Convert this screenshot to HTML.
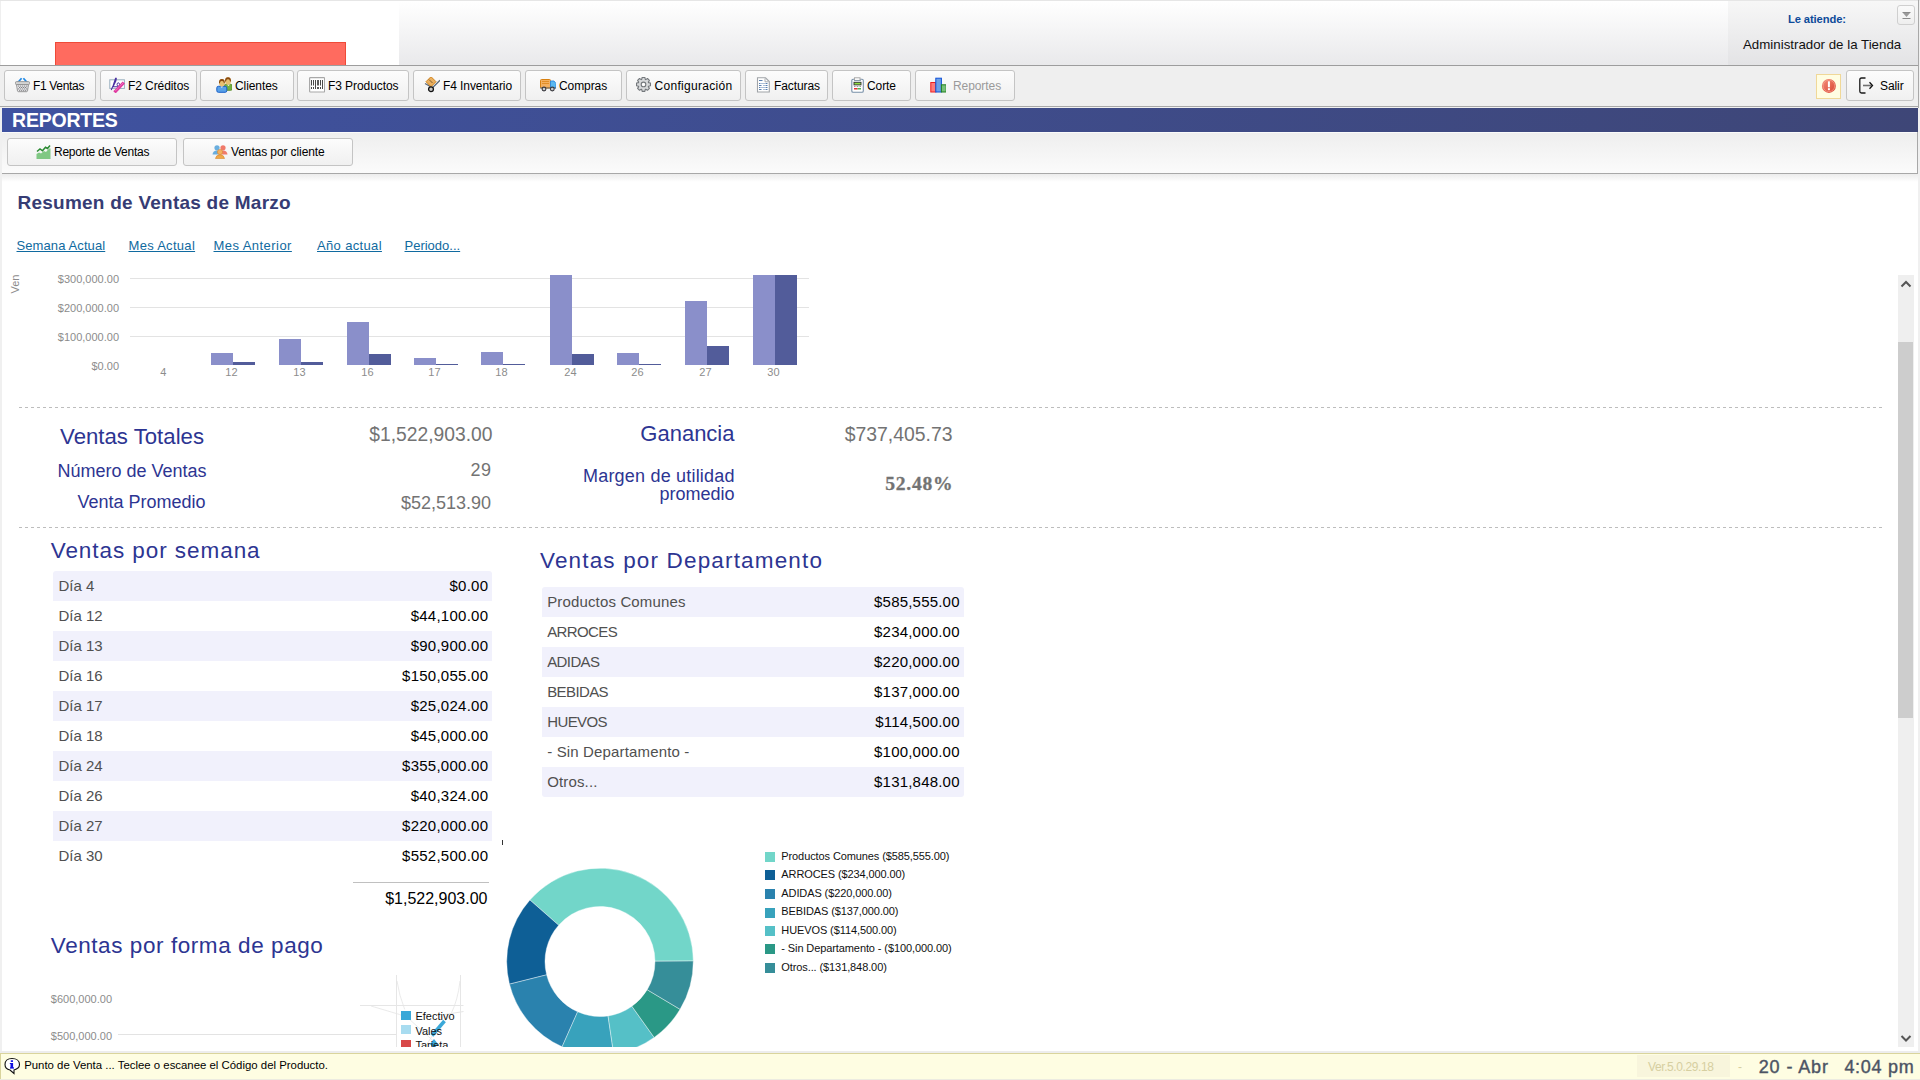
<!DOCTYPE html><html><head><meta charset="utf-8"><style>
*{box-sizing:border-box;margin:0;padding:0}
html,body{width:1920px;height:1080px;overflow:hidden;background:#f0f0f0;font-family:"Liberation Sans",sans-serif}
.a{position:absolute}
#hdr{left:0;top:0;width:1920px;height:66px;background:#efefef;border-top:1px solid #e6e6e6}
#hwhite{left:1px;top:1px;width:398px;height:64px;background:#fff}
#red{left:55px;top:42px;width:291px;height:23px;background:#ff6b5f;border:1px solid #ef4a38;border-bottom:none}
#hgrad{left:399px;top:1px;width:1329px;height:64px;background:linear-gradient(#ffffff,#e9e9eb)}
#hright{left:1728px;top:1px;width:190px;height:64px;background:linear-gradient(#f7f7f7,#e3e3e5)}
#hline{left:0;top:65px;width:1919px;height:1px;background:#9d9d9d}
#rline{left:1918px;top:0;width:1px;height:108px;background:#a8a8a8}
#tb{left:0;top:66px;width:1918px;height:40px;background:#efefef}
.btn{position:absolute;top:70px;height:31px;border:1px solid #c4c4c4;border-radius:3px;background:linear-gradient(#fcfcfc,#f0f0f0);font-size:12px;letter-spacing:-0.08px;color:#000;line-height:29px;white-space:nowrap}
.btn .ic{position:absolute;top:6px;width:16px;height:16px}
.btn .tx{position:absolute;top:1px}
#tline{left:0;top:106px;width:1919px;height:1px;background:#a8a8a8}
#banner{left:2px;top:108px;width:1916px;height:24px;background:linear-gradient(90deg,#3f52a0,#3e4677);color:#fff;font-weight:bold;font-size:19.5px;line-height:25.5px;padding-left:10px;letter-spacing:-0.2px;overflow:hidden}
#sub{left:2px;top:132px;width:1916px;height:41px;background:linear-gradient(#eeeeee,#fbfbfb)}
#sline{left:2px;top:173px;width:1916px;height:1px;background:#a8a8a8}
#content{left:2px;top:174px;width:1916px;height:877px;background:#fff;overflow:hidden}
#status{left:0;top:1053px;width:1920px;height:27px;background:#fefde2;border-top:1px solid #d9d49c;border-left:1px solid #d9d49c}
</style></head><body>

<div id="hdr" class="a"></div>
<div id="hwhite" class="a"><div id="red" class="a" style="left:54px;top:41px"></div></div>
<div id="hgrad" class="a"></div>
<div id="hright" class="a"></div>
<div id="hline" class="a"></div>
<div id="tb" class="a"></div>
<div id="tline" class="a"></div>
<div id="banner" class="a">REPORTES</div>
<div id="sub" class="a"></div>
<div id="sline" class="a"></div>
<div id="content" class="a"></div>
<div id="status" class="a"></div>
<div id="rline" class="a"></div>

<div class="a" style="left:2px;top:174px;width:1916px;height:8px;background:linear-gradient(#ececec,#ffffff);"></div>
<div class="a" style="left:1917px;top:132px;width:1px;height:42px;background:#a8a8a8;"></div>
<div class="a" style="left:2px;top:132px;width:1915px;height:1px;background:#fafafa;"></div>
<div class="a" style="top:192.91px;font:bold 19px/19px 'Liberation Sans',sans-serif;color:#363c74;white-space:nowrap;letter-spacing:0.24px;left:17.5px;">Resumen de Ventas de Marzo</div>
<div class="a" style="top:238.59px;font:normal 13px/13px 'Liberation Sans',sans-serif;color:#106aa0;white-space:nowrap;letter-spacing:0.1px;left:16.5px;text-decoration:underline;">Semana Actual</div>
<div class="a" style="top:238.59px;font:normal 13px/13px 'Liberation Sans',sans-serif;color:#106aa0;white-space:nowrap;letter-spacing:0.3px;left:128.5px;text-decoration:underline;">Mes Actual</div>
<div class="a" style="top:238.59px;font:normal 13px/13px 'Liberation Sans',sans-serif;color:#106aa0;white-space:nowrap;letter-spacing:0.45px;left:213.5px;text-decoration:underline;">Mes Anterior</div>
<div class="a" style="top:238.59px;font:normal 13px/13px 'Liberation Sans',sans-serif;color:#106aa0;white-space:nowrap;letter-spacing:0.35px;left:317px;text-decoration:underline;">Año actual</div>
<div class="a" style="top:238.59px;font:normal 13px/13px 'Liberation Sans',sans-serif;color:#106aa0;white-space:nowrap;left:404.5px;text-decoration:underline;">Periodo...</div>
<div class="a" style="left:130px;top:278px;width:679px;height:1px;background:#e3e3e3;"></div>
<div class="a" style="left:130px;top:307px;width:679px;height:1px;background:#e3e3e3;"></div>
<div class="a" style="left:130px;top:336px;width:679px;height:1px;background:#e3e3e3;"></div>
<div class="a" style="top:273.69px;font:normal 11px/11px 'Liberation Sans',sans-serif;color:#8c8c8c;white-space:nowrap;right:1801px;">$300,000.00</div>
<div class="a" style="top:302.69px;font:normal 11px/11px 'Liberation Sans',sans-serif;color:#8c8c8c;white-space:nowrap;right:1801px;">$200,000.00</div>
<div class="a" style="top:331.69px;font:normal 11px/11px 'Liberation Sans',sans-serif;color:#8c8c8c;white-space:nowrap;right:1801px;">$100,000.00</div>
<div class="a" style="top:360.69px;font:normal 11px/11px 'Liberation Sans',sans-serif;color:#8c8c8c;white-space:nowrap;right:1801px;">$0.00</div>
<div class="a" style="left:2px;top:277px;width:26px;height:14px;transform:rotate(-90deg);font:11px/14px 'Liberation Sans';color:#8c8c8c;text-align:center">Ven</div>
<div class="a" style="top:367.39px;font:normal 11px/11px 'Liberation Sans',sans-serif;color:#8c8c8c;white-space:nowrap;left:-136.6px;width:600px;text-align:center;">4</div>
<div class="a" style="left:211px;top:353px;width:22px;height:12px;background:#8a8fca;"></div>
<div class="a" style="left:233px;top:362px;width:22px;height:3px;background:#525c9a;"></div>
<div class="a" style="top:367.39px;font:normal 11px/11px 'Liberation Sans',sans-serif;color:#8c8c8c;white-space:nowrap;left:-68.6px;width:600px;text-align:center;">12</div>
<div class="a" style="left:279px;top:339px;width:22px;height:26px;background:#8a8fca;"></div>
<div class="a" style="left:301px;top:362px;width:22px;height:3px;background:#525c9a;"></div>
<div class="a" style="top:367.39px;font:normal 11px/11px 'Liberation Sans',sans-serif;color:#8c8c8c;white-space:nowrap;left:-0.6000000000000227px;width:600px;text-align:center;">13</div>
<div class="a" style="left:347px;top:322px;width:22px;height:43px;background:#8a8fca;"></div>
<div class="a" style="left:369px;top:354px;width:22px;height:11px;background:#525c9a;"></div>
<div class="a" style="top:367.39px;font:normal 11px/11px 'Liberation Sans',sans-serif;color:#8c8c8c;white-space:nowrap;left:67.39999999999998px;width:600px;text-align:center;">16</div>
<div class="a" style="left:414px;top:358px;width:22px;height:7px;background:#8a8fca;"></div>
<div class="a" style="left:436px;top:364px;width:22px;height:1px;background:#525c9a;"></div>
<div class="a" style="top:367.39px;font:normal 11px/11px 'Liberation Sans',sans-serif;color:#8c8c8c;white-space:nowrap;left:134.39999999999998px;width:600px;text-align:center;">17</div>
<div class="a" style="left:481px;top:352px;width:22px;height:13px;background:#8a8fca;"></div>
<div class="a" style="left:503px;top:364px;width:22px;height:1px;background:#525c9a;"></div>
<div class="a" style="top:367.39px;font:normal 11px/11px 'Liberation Sans',sans-serif;color:#8c8c8c;white-space:nowrap;left:201.39999999999998px;width:600px;text-align:center;">18</div>
<div class="a" style="left:550px;top:275px;width:22px;height:90px;background:#8a8fca;"></div>
<div class="a" style="left:572px;top:354px;width:22px;height:11px;background:#525c9a;"></div>
<div class="a" style="top:367.39px;font:normal 11px/11px 'Liberation Sans',sans-serif;color:#8c8c8c;white-space:nowrap;left:270.4px;width:600px;text-align:center;">24</div>
<div class="a" style="left:617px;top:353px;width:22px;height:12px;background:#8a8fca;"></div>
<div class="a" style="left:639px;top:364px;width:22px;height:1px;background:#525c9a;"></div>
<div class="a" style="top:367.39px;font:normal 11px/11px 'Liberation Sans',sans-serif;color:#8c8c8c;white-space:nowrap;left:337.4px;width:600px;text-align:center;">26</div>
<div class="a" style="left:685px;top:301px;width:22px;height:64px;background:#8a8fca;"></div>
<div class="a" style="left:707px;top:346px;width:22px;height:19px;background:#525c9a;"></div>
<div class="a" style="top:367.39px;font:normal 11px/11px 'Liberation Sans',sans-serif;color:#8c8c8c;white-space:nowrap;left:405.4px;width:600px;text-align:center;">27</div>
<div class="a" style="left:753px;top:275px;width:22px;height:90px;background:#8a8fca;"></div>
<div class="a" style="left:775px;top:275px;width:22px;height:90px;background:#525c9a;"></div>
<div class="a" style="top:367.39px;font:normal 11px/11px 'Liberation Sans',sans-serif;color:#8c8c8c;white-space:nowrap;left:473.4px;width:600px;text-align:center;">30</div>
<div class="a" style="left:19px;top:407px;width:1864px;height:1px;background:repeating-linear-gradient(90deg,#bdbdbd 0 3px,transparent 3px 6px);"></div>
<div class="a" style="left:19px;top:527px;width:1864px;height:1px;background:repeating-linear-gradient(90deg,#bdbdbd 0 3px,transparent 3px 6px);"></div>
<div class="a" style="top:426.00px;font:normal 22.2px/22.2px 'Liberation Sans',sans-serif;color:#2d3592;white-space:nowrap;right:1716px;">Ventas Totales</div>
<div class="a" style="top:424.66px;font:normal 19.3px/19.3px 'Liberation Sans',sans-serif;color:#737373;white-space:nowrap;right:1427.5px;">$1,522,903.00</div>
<div class="a" style="top:462.06px;font:normal 18px/18px 'Liberation Sans',sans-serif;color:#2d3592;white-space:nowrap;right:1713.5px;">Número de Ventas</div>
<div class="a" style="top:461.06px;font:normal 18px/18px 'Liberation Sans',sans-serif;color:#737373;white-space:nowrap;letter-spacing:0.5px;right:1429px;margin-right:-0.5px;">29</div>
<div class="a" style="top:493.26px;font:normal 18px/18px 'Liberation Sans',sans-serif;color:#2d3592;white-space:nowrap;right:1714.5px;">Venta Promedio</div>
<div class="a" style="top:493.96px;font:normal 18px/18px 'Liberation Sans',sans-serif;color:#737373;white-space:nowrap;right:1429px;">$52,513.90</div>
<div class="a" style="top:423.37px;font:normal 22px/22px 'Liberation Sans',sans-serif;color:#2d3592;white-space:nowrap;right:1185.5px;">Ganancia</div>
<div class="a" style="top:424.57px;font:normal 19.4px/19.4px 'Liberation Sans',sans-serif;color:#737373;white-space:nowrap;right:967.5px;">$737,405.73</div>
<div class="a" style="top:466.76px;font:normal 18px/18px 'Liberation Sans',sans-serif;color:#2d3592;white-space:nowrap;letter-spacing:0.2px;right:1185.5px;margin-right:-0.2px;">Margen de utilidad</div>
<div class="a" style="top:484.76px;font:normal 18px/18px 'Liberation Sans',sans-serif;color:#2d3592;white-space:nowrap;right:1185.5px;">promedio</div>
<div class="a" style="top:473.58px;font:bold 19.6px/19.6px 'Liberation Serif',sans-serif;color:#737373;white-space:nowrap;letter-spacing:0.7px;right:967.5px;margin-right:-0.7px;-webkit-text-stroke:0.3px #737373;">52.48%</div>
<div class="a" style="top:539.95px;font:normal 22.5px/22.5px 'Liberation Sans',sans-serif;color:#2d3592;white-space:nowrap;letter-spacing:0.94px;left:50.7px;">Ventas por semana</div>
<div class="a" style="left:53px;top:571px;width:439px;height:30px;background:#f1f1fc;border-radius:3px 3px 0 0;"></div>
<div class="a" style="top:578.30px;font:normal 15px/15px 'Liberation Sans',sans-serif;color:#505050;white-space:nowrap;left:58.5px;">Día 4</div>
<div class="a" style="top:578.30px;font:normal 15px/15px 'Liberation Sans',sans-serif;color:#000;white-space:nowrap;letter-spacing:0.25px;right:1432px;margin-right:-0.25px;">$0.00</div>
<div class="a" style="top:608.30px;font:normal 15px/15px 'Liberation Sans',sans-serif;color:#505050;white-space:nowrap;left:58.5px;">Día 12</div>
<div class="a" style="top:608.30px;font:normal 15px/15px 'Liberation Sans',sans-serif;color:#000;white-space:nowrap;letter-spacing:0.25px;right:1432px;margin-right:-0.25px;">$44,100.00</div>
<div class="a" style="left:53px;top:631px;width:439px;height:30px;background:#f1f1fc;"></div>
<div class="a" style="top:638.30px;font:normal 15px/15px 'Liberation Sans',sans-serif;color:#505050;white-space:nowrap;left:58.5px;">Día 13</div>
<div class="a" style="top:638.30px;font:normal 15px/15px 'Liberation Sans',sans-serif;color:#000;white-space:nowrap;letter-spacing:0.25px;right:1432px;margin-right:-0.25px;">$90,900.00</div>
<div class="a" style="top:668.30px;font:normal 15px/15px 'Liberation Sans',sans-serif;color:#505050;white-space:nowrap;left:58.5px;">Día 16</div>
<div class="a" style="top:668.30px;font:normal 15px/15px 'Liberation Sans',sans-serif;color:#000;white-space:nowrap;letter-spacing:0.25px;right:1432px;margin-right:-0.25px;">$150,055.00</div>
<div class="a" style="left:53px;top:691px;width:439px;height:30px;background:#f1f1fc;"></div>
<div class="a" style="top:698.30px;font:normal 15px/15px 'Liberation Sans',sans-serif;color:#505050;white-space:nowrap;left:58.5px;">Día 17</div>
<div class="a" style="top:698.30px;font:normal 15px/15px 'Liberation Sans',sans-serif;color:#000;white-space:nowrap;letter-spacing:0.25px;right:1432px;margin-right:-0.25px;">$25,024.00</div>
<div class="a" style="top:728.30px;font:normal 15px/15px 'Liberation Sans',sans-serif;color:#505050;white-space:nowrap;left:58.5px;">Día 18</div>
<div class="a" style="top:728.30px;font:normal 15px/15px 'Liberation Sans',sans-serif;color:#000;white-space:nowrap;letter-spacing:0.25px;right:1432px;margin-right:-0.25px;">$45,000.00</div>
<div class="a" style="left:53px;top:751px;width:439px;height:30px;background:#f1f1fc;"></div>
<div class="a" style="top:758.30px;font:normal 15px/15px 'Liberation Sans',sans-serif;color:#505050;white-space:nowrap;left:58.5px;">Día 24</div>
<div class="a" style="top:758.30px;font:normal 15px/15px 'Liberation Sans',sans-serif;color:#000;white-space:nowrap;letter-spacing:0.25px;right:1432px;margin-right:-0.25px;">$355,000.00</div>
<div class="a" style="top:788.30px;font:normal 15px/15px 'Liberation Sans',sans-serif;color:#505050;white-space:nowrap;left:58.5px;">Día 26</div>
<div class="a" style="top:788.30px;font:normal 15px/15px 'Liberation Sans',sans-serif;color:#000;white-space:nowrap;letter-spacing:0.25px;right:1432px;margin-right:-0.25px;">$40,324.00</div>
<div class="a" style="left:53px;top:811px;width:439px;height:30px;background:#f1f1fc;"></div>
<div class="a" style="top:818.30px;font:normal 15px/15px 'Liberation Sans',sans-serif;color:#505050;white-space:nowrap;left:58.5px;">Día 27</div>
<div class="a" style="top:818.30px;font:normal 15px/15px 'Liberation Sans',sans-serif;color:#000;white-space:nowrap;letter-spacing:0.25px;right:1432px;margin-right:-0.25px;">$220,000.00</div>
<div class="a" style="top:848.30px;font:normal 15px/15px 'Liberation Sans',sans-serif;color:#505050;white-space:nowrap;left:58.5px;">Día 30</div>
<div class="a" style="top:848.30px;font:normal 15px/15px 'Liberation Sans',sans-serif;color:#000;white-space:nowrap;letter-spacing:0.25px;right:1432px;margin-right:-0.25px;">$552,500.00</div>
<div class="a" style="left:353px;top:882px;width:136px;height:1px;background:#c0c0c0;"></div>
<div class="a" style="top:891.45px;font:normal 16px/16px 'Liberation Sans',sans-serif;color:#000;white-space:nowrap;right:1432.5px;">$1,522,903.00</div>
<div class="a" style="left:502px;top:840px;width:1px;height:5px;background:#333;"></div>
<div class="a" style="top:549.95px;font:normal 22.5px/22.5px 'Liberation Sans',sans-serif;color:#2d3592;white-space:nowrap;letter-spacing:1.16px;left:540px;">Ventas por Departamento</div>
<div class="a" style="left:542px;top:587px;width:422px;height:30px;background:#f1f1fc;border-radius:3px 3px 0 0;"></div>
<div class="a" style="top:594.30px;font:normal 15px/15px 'Liberation Sans',sans-serif;color:#505050;white-space:nowrap;letter-spacing:0.15px;left:547.2px;">Productos Comunes</div>
<div class="a" style="top:594.30px;font:normal 15px/15px 'Liberation Sans',sans-serif;color:#000;white-space:nowrap;letter-spacing:0.2px;right:960.5px;margin-right:-0.2px;">$585,555.00</div>
<div class="a" style="top:624.30px;font:normal 15px/15px 'Liberation Sans',sans-serif;color:#505050;white-space:nowrap;letter-spacing:-0.6px;left:547.2px;">ARROCES</div>
<div class="a" style="top:624.30px;font:normal 15px/15px 'Liberation Sans',sans-serif;color:#000;white-space:nowrap;letter-spacing:0.2px;right:960.5px;margin-right:-0.2px;">$234,000.00</div>
<div class="a" style="left:542px;top:647px;width:422px;height:30px;background:#f1f1fc;"></div>
<div class="a" style="top:654.30px;font:normal 15px/15px 'Liberation Sans',sans-serif;color:#505050;white-space:nowrap;letter-spacing:-0.6px;left:547.2px;">ADIDAS</div>
<div class="a" style="top:654.30px;font:normal 15px/15px 'Liberation Sans',sans-serif;color:#000;white-space:nowrap;letter-spacing:0.2px;right:960.5px;margin-right:-0.2px;">$220,000.00</div>
<div class="a" style="top:684.30px;font:normal 15px/15px 'Liberation Sans',sans-serif;color:#505050;white-space:nowrap;letter-spacing:-0.6px;left:547.2px;">BEBIDAS</div>
<div class="a" style="top:684.30px;font:normal 15px/15px 'Liberation Sans',sans-serif;color:#000;white-space:nowrap;letter-spacing:0.2px;right:960.5px;margin-right:-0.2px;">$137,000.00</div>
<div class="a" style="left:542px;top:707px;width:422px;height:30px;background:#f1f1fc;"></div>
<div class="a" style="top:714.30px;font:normal 15px/15px 'Liberation Sans',sans-serif;color:#505050;white-space:nowrap;letter-spacing:-0.6px;left:547.2px;">HUEVOS</div>
<div class="a" style="top:714.30px;font:normal 15px/15px 'Liberation Sans',sans-serif;color:#000;white-space:nowrap;letter-spacing:0.2px;right:960.5px;margin-right:-0.2px;">$114,500.00</div>
<div class="a" style="top:744.30px;font:normal 15px/15px 'Liberation Sans',sans-serif;color:#505050;white-space:nowrap;letter-spacing:0.15px;left:547.2px;">- Sin Departamento -</div>
<div class="a" style="top:744.30px;font:normal 15px/15px 'Liberation Sans',sans-serif;color:#000;white-space:nowrap;letter-spacing:0.2px;right:960.5px;margin-right:-0.2px;">$100,000.00</div>
<div class="a" style="left:542px;top:767px;width:422px;height:30px;background:#f1f1fc;border-radius:0 0 3px 3px;"></div>
<div class="a" style="top:774.30px;font:normal 15px/15px 'Liberation Sans',sans-serif;color:#505050;white-space:nowrap;letter-spacing:0.15px;left:547.2px;">Otros...</div>
<div class="a" style="top:774.30px;font:normal 15px/15px 'Liberation Sans',sans-serif;color:#000;white-space:nowrap;letter-spacing:0.2px;right:960.5px;margin-right:-0.2px;">$131,848.00</div>
<svg class="a" style="left:0;top:0;overflow:hidden" width="1920" height="1047" viewBox="0 0 1920 1047"><path d="M693.30 961.01 A93.3 93.3 0 0 0 529.89 899.95 L558.67 925.21 A55 55 0 0 1 655.00 961.21 Z" fill="#72d6c9" stroke="#fff" stroke-width="0.4"/><path d="M529.89 899.95 A93.3 93.3 0 0 0 509.49 984.13 L546.64 974.84 A55 55 0 0 1 558.67 925.21 Z" fill="#0e5f96" stroke="#fff" stroke-width="0.4"/><path d="M509.49 984.13 A93.3 93.3 0 0 0 562.11 1046.76 L577.67 1011.76 A55 55 0 0 1 546.64 974.84 Z" fill="#2a82ae" stroke="#fff" stroke-width="0.4"/><path d="M562.11 1046.76 A93.3 93.3 0 0 0 613.67 1053.79 L608.06 1015.91 A55 55 0 0 1 577.67 1011.76 Z" fill="#38a2bc" stroke="#fff" stroke-width="0.4"/><path d="M613.67 1053.79 A93.3 93.3 0 0 0 654.17 1037.46 L631.93 1006.28 A55 55 0 0 1 608.06 1015.91 Z" fill="#55c0c7" stroke="#fff" stroke-width="0.4"/><path d="M654.17 1037.46 A93.3 93.3 0 0 0 680.08 1009.37 L647.21 989.72 A55 55 0 0 1 631.93 1006.28 Z" fill="#2a9886" stroke="#fff" stroke-width="0.4"/><path d="M680.08 1009.37 A93.3 93.3 0 0 0 693.30 961.01 L655.00 961.21 A55 55 0 0 1 647.21 989.72 Z" fill="#368e99" stroke="#fff" stroke-width="0.4"/></svg>
<div class="a" style="left:765px;top:852px;width:10px;height:10px;background:#72d6c9;"></div>
<div class="a" style="top:850.99px;font:normal 11px/11px 'Liberation Sans',sans-serif;color:#111;white-space:nowrap;letter-spacing:-0.1px;left:781.3px;">Productos Comunes ($585,555.00)</div>
<div class="a" style="left:765px;top:870px;width:10px;height:10px;background:#0e5f96;"></div>
<div class="a" style="top:869.49px;font:normal 11px/11px 'Liberation Sans',sans-serif;color:#111;white-space:nowrap;letter-spacing:-0.1px;left:781.3px;">ARROCES ($234,000.00)</div>
<div class="a" style="left:765px;top:889px;width:10px;height:10px;background:#2a82ae;"></div>
<div class="a" style="top:887.99px;font:normal 11px/11px 'Liberation Sans',sans-serif;color:#111;white-space:nowrap;letter-spacing:-0.1px;left:781.3px;">ADIDAS ($220,000.00)</div>
<div class="a" style="left:765px;top:908px;width:10px;height:10px;background:#38a2bc;"></div>
<div class="a" style="top:906.49px;font:normal 11px/11px 'Liberation Sans',sans-serif;color:#111;white-space:nowrap;letter-spacing:-0.1px;left:781.3px;">BEBIDAS ($137,000.00)</div>
<div class="a" style="left:765px;top:926px;width:10px;height:10px;background:#55c0c7;"></div>
<div class="a" style="top:924.99px;font:normal 11px/11px 'Liberation Sans',sans-serif;color:#111;white-space:nowrap;letter-spacing:-0.1px;left:781.3px;">HUEVOS ($114,500.00)</div>
<div class="a" style="left:765px;top:944px;width:10px;height:10px;background:#2a9886;"></div>
<div class="a" style="top:943.49px;font:normal 11px/11px 'Liberation Sans',sans-serif;color:#111;white-space:nowrap;letter-spacing:-0.1px;left:781.3px;">- Sin Departamento - ($100,000.00)</div>
<div class="a" style="left:765px;top:963px;width:10px;height:10px;background:#368e99;"></div>
<div class="a" style="top:961.99px;font:normal 11px/11px 'Liberation Sans',sans-serif;color:#111;white-space:nowrap;letter-spacing:-0.1px;left:781.3px;">Otros... ($131,848.00)</div>
<div class="a" style="top:934.95px;font:normal 22.5px/22.5px 'Liberation Sans',sans-serif;color:#2d3592;white-space:nowrap;letter-spacing:0.57px;left:50.8px;">Ventas por forma de pago</div>
<div class="a" style="top:993.69px;font:normal 11px/11px 'Liberation Sans',sans-serif;color:#8c8c8c;white-space:nowrap;right:1808px;">$600,000.00</div>
<div class="a" style="top:1030.69px;font:normal 11px/11px 'Liberation Sans',sans-serif;color:#8c8c8c;white-space:nowrap;right:1808px;">$500,000.00</div>
<div class="a" style="left:118px;top:1034px;width:278px;height:1px;background:#e3e3e3;"></div>
<svg class="a" style="left:355px;top:970px" width="110" height="77" viewBox="355 970 110 77"><path d="M360 1005.5 L463.5 1005.5 M396.5 975 L396.5 1047 M460.5 975 L460.5 1047 M445 1014.5 L463.5 1011.5" stroke="#e6e6e6" stroke-width="1" fill="none"/><path d="M371 1006 L399.6 1014.5 L409.8 1019.6 L428.6 1036.7 L440 1047 M397 981 Q399 995 404.7 1009.4 M460 981 Q458 1000 450.7 1014.5 L432.8 1035 L425 1047" stroke="#e4e4e4" stroke-width="0.8" fill="none"/><path d="M444.5 1021 L432 1035.5" stroke="#3aa8d8" stroke-width="3.5"/><path d="M434 1039 L438 1044 L434 1049 L430 1044 Z" fill="#3aa8d8"/></svg>
<div class="a" style="left:395px;top:1005px;width:70px;height:42px;overflow:hidden">
<div class="a" style="left:6px;top:5.5px;width:10px;height:9px;background:#3aa8d8"></div>
<div class="a" style="left:20.399999999999977px;top:5.7px;font:11px/11px 'Liberation Sans';color:#111;white-space:nowrap">Efectivo</div>
<div class="a" style="left:6px;top:20.3px;width:10px;height:9px;background:#a8dcf0"></div>
<div class="a" style="left:20.399999999999977px;top:20.5px;font:11px/11px 'Liberation Sans';color:#111;white-space:nowrap">Vales</div>
<div class="a" style="left:6px;top:35.1px;width:10px;height:9px;background:#d84848"></div>
<div class="a" style="left:20.399999999999977px;top:35.3px;font:11px/11px 'Liberation Sans';color:#111;white-space:nowrap">Tarjeta</div>
</div>
<div class="a" style="left:1898px;top:275px;width:16px;height:772px;background:#efefef;"></div>
<div class="a" style="left:1898px;top:342px;width:15px;height:376px;background:#cdcdcd;"></div>
<svg class="a" style="left:1899px;top:279px" width="14" height="10" viewBox="0 0 14 10"><path d="M2.5 7.5 L7 3 L11.5 7.5" stroke="#555" stroke-width="2" fill="none"/></svg>
<svg class="a" style="left:1899px;top:1033px" width="14" height="10" viewBox="0 0 14 10"><path d="M2.5 3 L7 7.5 L11.5 3" stroke="#555" stroke-width="2" fill="none"/></svg>
<div class="a" style="left:0px;top:1051px;width:1920px;height:2px;background:#ededed;"></div>
<div class="a" style="left:0px;top:1079px;width:1920px;height:1px;background:#ecebe0;"></div>
<svg class="a" style="left:4px;top:1057px" width="18" height="18" viewBox="0 0 18 18"><path d="M8 1.5 C3.5 1.5 1 4 1 7.5 C1 10.5 3.5 12.5 6 13 L10 16.5 L10 13 C13.5 12 15.5 10 15.5 7.5 C15.5 4 12.5 1.5 8 1.5 Z" fill="#fff" stroke="#111" stroke-width="1.1"/><rect x="6.5" y="6" width="2.6" height="5" fill="#1010e0"/><rect x="6" y="10.3" width="4" height="1.3" fill="#1010e0"/><rect x="5.8" y="6" width="2" height="1" fill="#1010e0"/><rect x="6.8" y="3.3" width="2.2" height="1.6" fill="#1010e0"/></svg>
<div class="a" style="top:1060.35px;font:normal 11.4px/11.4px 'Liberation Sans',sans-serif;color:#000;white-space:nowrap;left:24.2px;">Punto de Venta ... Teclee o escanee el Código del Producto.</div>
<div class="a" style="left:1637px;top:1055px;width:93px;height:22px;background:#f8f5dc;"></div>
<div class="a" style="top:1060.84px;font:normal 12px/12px 'Liberation Sans',sans-serif;color:#d6cfa0;white-space:nowrap;letter-spacing:-0.4px;left:1648px;">Ver.5.0.29.18</div>
<div class="a" style="top:1060.84px;font:normal 12px/12px 'Liberation Sans',sans-serif;color:#d6cfa0;white-space:nowrap;left:1738px;">-</div>
<div class="a" style="top:1057.56px;font:normal 18px/18px 'Liberation Sans',sans-serif;color:#4c5464;white-space:nowrap;letter-spacing:0.9px;left:1758.7px;-webkit-text-stroke:0.4px #4c5464;">20 - Abr</div>
<div class="a" style="top:1057.56px;font:normal 18px/18px 'Liberation Sans',sans-serif;color:#4c5464;white-space:nowrap;letter-spacing:0.7px;left:1844.4px;-webkit-text-stroke:0.4px #4c5464;">4:04 pm</div>
<!-- toolbar buttons -->
<div class="btn" style="left:4px;width:92px"><svg class="ic" style="left:10px" viewBox="0 0 16 16"><path d="M2.6 5.8 L6.6 1.3 M8.4 1.3 L12.4 5.8" stroke="#1e88e5" stroke-width="1.7" fill="none"/><rect x="0.4" y="4.6" width="14.2" height="3" rx="1.2" fill="#d4d4d4" stroke="#8a8a8a" stroke-width="0.8"/><path d="M1.5 7.6 L13.5 7.6 L12.5 13.9 Q12.3 14.7 11.5 14.7 L3.5 14.7 Q2.7 14.7 2.5 13.9 Z" fill="#ececf0" stroke="#8a8a8a" stroke-width="0.9"/><rect x="3.2" y="8.6" width="1" height="1" fill="#6a6a6a"/><rect x="5.2" y="8.6" width="1" height="1" fill="#6a6a6a"/><rect x="7.2" y="8.6" width="1" height="1" fill="#6a6a6a"/><rect x="9.2" y="8.6" width="1" height="1" fill="#6a6a6a"/><rect x="11.2" y="8.6" width="1" height="1" fill="#6a6a6a"/><rect x="4.2" y="10.0" width="1" height="1" fill="#6a6a6a"/><rect x="6.2" y="10.0" width="1" height="1" fill="#6a6a6a"/><rect x="8.2" y="10.0" width="1" height="1" fill="#6a6a6a"/><rect x="10.2" y="10.0" width="1" height="1" fill="#6a6a6a"/><rect x="3.2" y="11.4" width="1" height="1" fill="#6a6a6a"/><rect x="5.2" y="11.4" width="1" height="1" fill="#6a6a6a"/><rect x="7.2" y="11.4" width="1" height="1" fill="#6a6a6a"/><rect x="9.2" y="11.4" width="1" height="1" fill="#6a6a6a"/><rect x="11.2" y="11.4" width="1" height="1" fill="#6a6a6a"/><rect x="4.2" y="12.8" width="1" height="1" fill="#6a6a6a"/><rect x="6.2" y="12.8" width="1" height="1" fill="#6a6a6a"/><rect x="8.2" y="12.8" width="1" height="1" fill="#6a6a6a"/><rect x="10.2" y="12.8" width="1" height="1" fill="#6a6a6a"/></svg><span class="tx" style="left:28px;letter-spacing:-0.33px">F1 Ventas</span></div>
<div class="btn" style="left:100px;width:97px"><svg class="ic" style="left:8px" viewBox="0 0 16 16"><rect x="0.8" y="2.8" width="14.6" height="8.6" fill="#fff" stroke="#98aebe" stroke-width="1"/><path d="M2.2 13 L4.2 8.5 L6.5 1.5 Q7 0.8 7.3 1.5 L6.8 4 L4 9.8 L9.5 9.8" stroke="#4a30a0" stroke-width="1.1" fill="none"/><ellipse cx="9.3" cy="7.5" rx="1.2" ry="1.7" fill="none" stroke="#4a30a0" stroke-width="1"/><path d="M5.5 15.3 L14.8 5.5" stroke="#e03aa0" stroke-width="3.2"/><path d="M6.5 13.8 L14 6" stroke="#fbd0ea" stroke-width="0.7" stroke-dasharray="0.8 0.8"/></svg><span class="tx" style="left:27px">F2 Créditos</span></div>
<div class="btn" style="left:200px;width:94px"><svg class="ic" style="left:15px" viewBox="0 0 16 16"><rect x="8.2" y="7.3" width="8" height="6" rx="1.6" fill="#72b040" stroke="#5a8a28" stroke-width="0.9"/><path d="M11 7.5 L12.5 9 L14 7.5" fill="#fff"/><ellipse cx="12" cy="4" rx="2.9" ry="3.7" fill="#e8c070"/><path d="M9 4.5 Q8.8 0.2 12 0.2 Q15.2 0.2 15 4.5 L14 4.5 Q13.8 2 12 2.2 Q10.2 2 10 4.5 Z" fill="#8a4a10"/><rect x="0.8" y="9.3" width="10" height="6" rx="1.6" fill="#58a0e8" stroke="#1a60c8" stroke-width="1"/><path d="M4.5 9.4 L5.8 10.8 L7.1 9.4" fill="#fff"/><ellipse cx="5.9" cy="5.7" rx="2.9" ry="3.7" fill="#e8c070"/><path d="M3 6.2 Q2.8 1.9 5.9 1.9 Q9 1.9 8.8 6.2 L7.9 6.2 Q7.7 3.7 5.9 3.9 Q4.1 3.7 3.9 6.2 Z" fill="#8a4a10"/></svg><span class="tx" style="left:34px">Clientes</span></div>
<div class="btn" style="left:297px;width:112px"><svg class="ic" style="left:11px" viewBox="0 0 16 16"><rect x="0.6" y="0.6" width="15" height="14.4" rx="0.8" fill="#fff" stroke="#a8a8a8" stroke-width="1.2"/><path d="M2.5 3v5.5M4.5 3v5.5M6.5 3v9M11.5 3v5.5M13.5 3v9M2.5 10v2M4.5 10v2M11.5 10v2" stroke="#4a4a4a" stroke-width="1"/><path d="M9 3v5.5M9 10v2" stroke="#4a4a4a" stroke-width="1.8"/></svg><span class="tx" style="left:30px">F3 Productos</span></div>
<div class="btn" style="left:413px;width:108px"><svg class="ic" style="left:10px" viewBox="0 0 16 16"><path d="M1 6.5 L8.5 10.8 L16 3.2" stroke="#5a6878" stroke-width="1.3" fill="none"/><path d="M7 -0.3 L12 4.7 L7 9.7 L2 4.7 Z" fill="#eab060" stroke="#d08018" stroke-width="1"/><path d="M5.3 2.8 L8.2 5.7" stroke="#2a1a08" stroke-width="1" stroke-dasharray="0.9 0.6"/><circle cx="7" cy="12.2" r="2.4" fill="#c8c8c8" stroke="#111" stroke-width="1.3"/></svg><span class="tx" style="left:29px">F4 Inventario</span></div>
<div class="btn" style="left:525px;width:97px"><svg class="ic" style="left:14px" viewBox="0 0 16 16"><rect x="0.5" y="2.5" width="10" height="8.5" rx="1" fill="#f4b060" stroke="#d88010" stroke-width="1"/><path d="M2 4.5h7M2 6.5h7" stroke="#e08a20" stroke-width="0.9"/><path d="M10.5 4 L14 4 L16 6.5 L16 11 L10.5 11 Z" fill="#5ab8f0" stroke="#2a88e0" stroke-width="0.9"/><path d="M0 11h16" stroke="#4a5868" stroke-width="0.8"/><circle cx="4" cy="12" r="1.9" fill="#ccc" stroke="#3a3a40" stroke-width="1.1"/><circle cx="12.3" cy="12" r="1.9" fill="#ccc" stroke="#3a3a40" stroke-width="1.1"/></svg><span class="tx" style="left:33px">Compras</span></div>
<div class="btn" style="left:626px;width:115px"><svg class="ic" style="left:9px" viewBox="0 0 16 16"><path d="M12.48 5.59 L14.47 6.05 L14.47 8.75 L12.48 9.21 L12.30 9.64 L13.39 11.37 L11.47 13.29 L9.74 12.20 L9.31 12.38 L8.85 14.37 L6.15 14.37 L5.69 12.38 L5.26 12.20 L3.53 13.29 L1.61 11.37 L2.70 9.64 L2.52 9.21 L0.53 8.75 L0.53 6.05 L2.52 5.59 L2.70 5.16 L1.61 3.43 L3.53 1.51 L5.26 2.60 L5.69 2.42 L6.15 0.43 L8.85 0.43 L9.31 2.42 L9.74 2.60 L11.47 1.51 L13.39 3.43 L12.30 5.16 Z" fill="#d6d8da" stroke="#74787c" stroke-width="1.1" stroke-linejoin="round"/><circle cx="7.5" cy="7.4" r="2.3" fill="#fff" stroke="#74787c" stroke-width="1.1"/></svg><span class="tx" style="left:27.5px;letter-spacing:0.3px">Configuración</span></div>
<div class="btn" style="left:745px;width:83px"><svg class="ic" style="left:10px" viewBox="0 0 16 16"><path d="M1.5 0.8 L9.5 0.8 L13.3 4.6 L13.3 15 L1.5 15 Z" fill="#fff" stroke="#a0a4a8" stroke-width="1.1"/><path d="M9 1.5 L9 4.8 L12.5 4.8" fill="none" stroke="#a0a4a8" stroke-width="0.9"/><path d="M3 3.5h3.5M3 6.5h1.5M5.5 6.5h1M7.5 6.5h1M9.5 6.5h2M3 8.5h2.5M7.5 8.5h1M9.5 8.5h2M3 10.5h1.5M5.5 10.5h1M7.5 10.5h1M9.5 10.5h2M3 12.5h2.5M7.5 12.5h1M9.5 12.5h2" stroke="#5a80b0" stroke-width="1"/></svg><span class="tx" style="left:28px">Facturas</span></div>
<div class="btn" style="left:832px;width:79px"><svg class="ic" style="left:17px" viewBox="0 0 16 16"><rect x="1.8" y="2.2" width="11.5" height="13" rx="1.3" fill="#fff" stroke="#7890a8" stroke-width="1.1"/><rect x="4.5" y="0.8" width="5.5" height="2.6" fill="#fff" stroke="#a8a8a8" stroke-width="1"/><path d="M4 3.6h7" stroke="#7890a8" stroke-width="0.8"/><rect x="4" y="5.3" width="7" height="2.6" fill="#90e040" stroke="#303030" stroke-width="0.9"/><path d="M4 9.5h1.5M6.7 9.5h1.6M9.5 9.5h1.5" stroke="#909090" stroke-width="0.9"/><path d="M4 11.8h3.5" stroke="#e00000" stroke-width="1.2"/><path d="M7.5 11.8h3.5" stroke="#28a028" stroke-width="1.2"/></svg><span class="tx" style="left:34px">Corte</span></div>
<div class="btn" style="left:915px;width:100px;color:#9a9a9a"><svg class="ic" style="left:14px" viewBox="0 0 16 16"><rect x="0.8" y="5.5" width="5" height="9.5" fill="#ff7a7a" stroke="#ee2020" stroke-width="1"/><rect x="5.8" y="1.2" width="5.6" height="13.8" fill="#6ca0e8" stroke="#1050d8" stroke-width="1"/><rect x="11.4" y="7.8" width="4.8" height="7.2" fill="#78c078" stroke="#208020" stroke-width="1"/></svg><span class="tx" style="left:37px">Reportes</span></div>
<div class="a" style="left:1816px;top:74px;width:25px;height:25px;background:#fffde2;border:1px solid #f0d898"><svg class="a" style="left:4px;top:3px" width="16" height="16" viewBox="0 0 16 16"><defs><linearGradient id="wg" x1="0" y1="0" x2="1" y2="1"><stop offset="0" stop-color="#f4907a"/><stop offset="1" stop-color="#d84030"/></linearGradient></defs><circle cx="7.9" cy="7.9" r="7" fill="url(#wg)"/><circle cx="7.9" cy="7.9" r="5.8" fill="none" stroke="#f8a898" stroke-width="0.6"/><rect x="6.9" y="3.3" width="2" height="6" fill="#fff"/><rect x="6.9" y="10.2" width="2" height="2" fill="#fff"/></svg></div>
<div class="btn" style="left:1846px;width:68px"><svg class="ic" style="left:11px;top:5.5px;width:18px;height:17px" viewBox="0 0 18 17"><path d="M7.5 1 L3.5 1 Q1.8 1 1.8 2.8 L1.8 14.2 Q1.8 16 3.5 16 L7.5 16" fill="none" stroke="#1a1a1a" stroke-width="1.3"/><path d="M5 8.5 L13.5 8.5" stroke="#707070" stroke-width="1.6"/><path d="M11.5 5.3 L14.5 8.5 L11.5 11.7" fill="none" stroke="#111" stroke-width="1.3"/></svg><span class="tx" style="left:33px">Salir</span></div>
<!-- header right -->
<div class="a" style="left:1788px;top:13px;font-size:11.2px;font-weight:bold;color:#0d4a9a;letter-spacing:-0.1px">Le atiende:</div>
<div class="a" style="left:1743px;top:37px;font-size:13.3px;color:#111">Administrador de la Tienda</div>
<div class="a" style="left:1897px;top:5px;width:18px;height:20px;border:1px solid #cfcfcf;border-radius:3px;background:linear-gradient(#fafafa,#eeeeee)"><svg class="a" style="left:4px;top:6px" width="9" height="7" viewBox="0 0 9 7"><path d="M0.5 0.5h8M0.5 6.5h8" stroke="#8a8a8a" stroke-width="1"/><path d="M1 1 L8 1 L4.5 5 Z" fill="#9a9a9a"/></svg></div>

<!-- sub toolbar -->
<div class="btn" style="left:7px;top:138px;width:170px;height:28px;line-height:26px"><svg class="ic" style="left:28px;top:5px" viewBox="0 0 16 16"><path d="M0.5 15 L0.5 10 L3 8.5 L5 9.5 L8 7 L10 8 L13 4.5 L14.5 4.5 L14.5 15 Z" fill="#80c884"/><path d="M1 7.5 L4 5 L6.5 6.8 L9.5 3.3 L11.5 4.5 L14 1.5" fill="none" stroke="#2a8a32" stroke-width="1.5"/></svg><span class="tx" style="left:46px;top:0;letter-spacing:-0.25px">Reporte de Ventas</span></div>
<div class="btn" style="left:183px;top:138px;width:170px;height:28px;line-height:26px"><svg class="ic" style="left:28px;top:5px" viewBox="0 0 16 16"><circle cx="5" cy="3.8" r="2.6" fill="#6aaede"/><path d="M0.5 10.5 Q1 6.5 5 6.5 Q8 6.5 8.5 9 L8.5 10.5 Z" fill="#6aaede"/><circle cx="11" cy="3.8" r="2.6" fill="#f07a6a"/><path d="M7.5 9 Q8 6.5 11 6.5 Q15 6.5 15.5 10.5 L7.5 10.5 Z" fill="#f07a6a"/><circle cx="8" cy="8" r="2.6" fill="#f4b060" stroke="#d88a30" stroke-width="0.6"/><path d="M3.5 14.5 Q4 10.8 8 10.8 Q12 10.8 12.5 14.5 Z" fill="#f0a848" stroke="#d88a30" stroke-width="0.6"/></svg><span class="tx" style="left:47px;top:0;letter-spacing:-0.1px">Ventas por cliente</span></div>

</body></html>
